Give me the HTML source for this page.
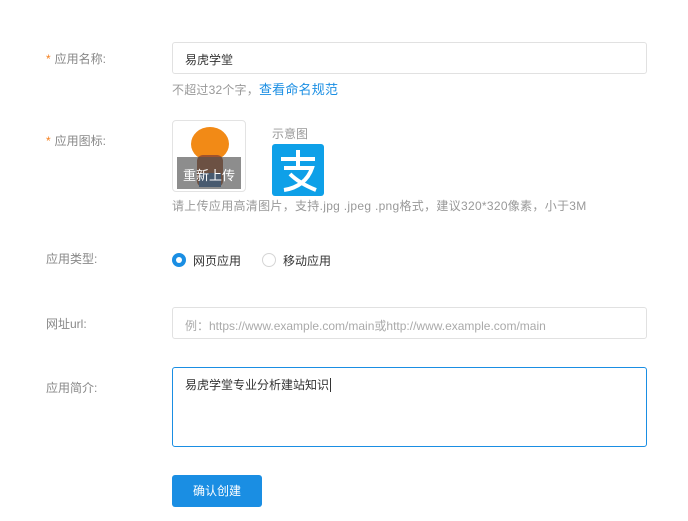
<!DOCTYPE html>
<html><head><meta charset="utf-8"><style>
body{margin:0;width:688px;height:521px;background:#fff;font-family:"Liberation Sans","Noto Sans CJK SC",sans-serif;position:relative;overflow:hidden}
.a{position:absolute}
.lbl{font-size:12px;color:#888}
.star{color:#f5801f;margin-right:4px}
.inp{border:1px solid #e1e1e1;border-radius:3px;box-sizing:border-box;font-size:12px}
.hint{font-size:12px;color:#999}
</style></head><body>
<div class="a lbl" style="left:46px;top:50px"><span class="star">*</span>应用名称:</div>
<div class="a inp" style="left:172px;top:42px;width:475px;height:32px;padding:8px 12px;color:#333">易虎学堂</div>
<div class="a hint" style="left:172px;top:79px;letter-spacing:0.2px">不超过32个字，<span style="color:#1a8ee3;font-size:13px">查看命名规范</span></div>

<div class="a lbl" style="left:46px;top:132px"><span class="star">*</span>应用图标:</div>
<div class="a" style="left:172px;top:120px;width:74px;height:72px;border:1px solid #e3e3e3;border-radius:4px;box-sizing:border-box;overflow:hidden">
 <div class="a" style="left:4px;top:4px;width:64px;height:64px;background:#fff;overflow:hidden">
  <div class="a" style="left:14px;top:2px;width:38px;height:34px;border-radius:50%;background:#f28a16"></div>
  <div class="a" style="left:20px;top:30px;width:26px;height:32px;border-radius:6px;background:#a0532d"></div>
  <div class="a" style="left:22px;top:48px;width:22px;height:14px;background:#3a6ea8"></div>
  <div class="a" style="left:0;top:32px;width:64px;height:34px;background:rgba(80,80,80,.65)"></div>
  <div class="a" style="left:6px;top:40px;color:#fff;font-size:13px">重新上传</div>
 </div>
</div>
<div class="a hint" style="left:272px;top:125px">示意图</div>
<div class="a" style="left:272px;top:144px;width:52px;height:52px;background:#0ea0e8;border-radius:3px">
 <svg width="52" height="52" viewBox="0 0 52 52"><g fill="none" stroke="#fff" stroke-width="4"><path d="M9 15h34M26 6v16M12 24h28c-4 12-14 20-28 22M18 30c6 6 16 12 26 16"/></g></svg>
</div>
<div class="a hint" style="left:172px;top:197px;letter-spacing:0.3px">请上传应用高清图片，支持.jpg .jpeg .png格式，建议320*320像素，小于3M</div>

<div class="a lbl" style="left:46px;top:250px">应用类型:</div>
<div class="a" style="left:172px;top:253px;width:14px;height:14px;border-radius:50%;background:#1a8ee3"><div class="a" style="left:4px;top:4px;width:6px;height:6px;border-radius:50%;background:#fff"></div></div>
<div class="a" style="left:193px;top:252px;font-size:12px;color:#333">网页应用</div>
<div class="a" style="left:262px;top:253px;width:12px;height:12px;border-radius:50%;border:1px solid #d5d5d5"></div>
<div class="a" style="left:283px;top:252px;font-size:12px;color:#333">移动应用</div>

<div class="a lbl" style="left:46px;top:315px">网址url:</div>
<div class="a inp" style="left:172px;top:307px;width:475px;height:32px;padding:9px 12px;color:#aaa">例：https://www.example.com/main或http://www.example.com/main</div>

<div class="a lbl" style="left:46px;top:379px">应用简介:</div>
<div class="a inp" style="left:172px;top:367px;width:475px;height:80px;padding:8px 12px;color:#333;border-color:#1a8ee3">易虎学堂专业分析建站知识<span style="border-left:1px solid #333;margin-left:1px"></span></div>

<div class="a" style="left:172px;top:475px;width:90px;height:32px;background:#1a8ee3;border-radius:3px;color:#fff;font-size:12px;text-align:center;line-height:32px">确认创建</div>
</body></html>
